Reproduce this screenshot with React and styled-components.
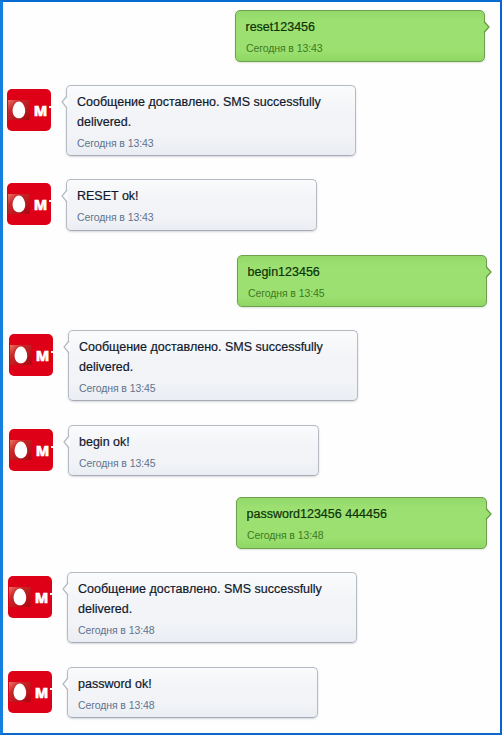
import React from 'react';
import styled, { createGlobalStyle, css } from 'styled-components';

const groups = [
  {
    shift: 0,
    time: 'Сегодня в 13:43',
    messages: [
      { out: true, text: ['reset123456'], width: 250, height: 52, gap: 23 },
      { text: ['Сообщение доставлено. SMS successfully', 'delivered.'], width: 290, height: 71, gap: 23 },
      { text: ['RESET ok!'], width: 251, height: 52, gap: 24 },
    ],
  },
  {
    shift: 2,
    time: 'Сегодня в 13:45',
    messages: [
      { out: true, text: ['begin123456'], width: 250, height: 52, gap: 23 },
      { text: ['Сообщение доставлено. SMS successfully', 'delivered.'], width: 290, height: 71, gap: 24 },
      { text: ['begin ok!'], width: 251, height: 51, gap: 21 },
    ],
  },
  {
    shift: 1,
    time: 'Сегодня в 13:48',
    messages: [
      { out: true, text: ['password123456 444456'], width: 251, height: 52, gap: 23 },
      { text: ['Сообщение доставлено. SMS successfully', 'delivered.'], width: 290, height: 71, gap: 24 },
      { text: ['password ok!'], width: 251, height: 51, gap: 0 },
    ],
  },
];

function OperatorLogo() {
  return (
    <LogoSvg viewBox="0 0 44 43">
      <defs>
        <linearGradient id="tile" x1="0" y1="0" x2="1" y2="1">
          <stop offset="0" stopColor="#ec7563" />
          <stop offset="0.3" stopColor="#c9282a" />
          <stop offset="1" stopColor="#a90711" />
        </linearGradient>
      </defs>
      <rect width="44" height="43" fill="#dd0017" />
      <rect x="1" y="11" width="21.5" height="20" fill="url(#tile)" />
      <path
        d="M11.900 12.500c3.600 0 6.300 4.900 6.300 9.200 0 4.300-2.600 7.600-6.200 7.600-3.800 0-6.400-3.300-6.400-7.600 0-4.300 2.700-9.200 6.300-9.200z"
        fill="#fff"
      />
      <LogoText x="26.800" y="26.800">
        М
      </LogoText>
      <rect x="42" y="17" width="2" height="2" fill="#fff" />
    </LogoSvg>
  );
}

function Message({ message, time }) {
  const { out, text, width, height, gap } = message;
  return (
    <Row $out={out} $gap={gap}>
      {!out && (
        <Avatar>
          <OperatorLogo />
        </Avatar>
      )}
      <Bubble $out={out} $width={width} $height={height}>
        {text.map((line) => (
          <Line key={line} $out={out}>
            {line}
          </Line>
        ))}
        <Time $out={out}>{time}</Time>
        <Tail $out={out} viewBox="0 0 7 14">
          {out ? (
            <>
              <path d="M0 1.500H1L6 7L1 12.500H0z" fill="#9be070" />
              <path d="M1 1.500L6 7L1 12.500" fill="none" stroke="#629b3b" strokeWidth="1.200" />
            </>
          ) : (
            <>
              <path d="M7 1H6L1 7L6 13H7z" fill="#fafbfc" />
              <path d="M6 1L1 7L6 13" fill="none" stroke="#b3b9c1" strokeWidth="1.200" />
            </>
          )}
        </Tail>
      </Bubble>
    </Row>
  );
}

function App() {
  return (
    <>
      <GlobalStyle />
      <Frame>
        {groups.map((group) => (
          <Group key={group.time} $shift={group.shift}>
            {group.messages.map((message) => (
              <Message key={message.text[0]} message={message} time={group.time} />
            ))}
          </Group>
        ))}
      </Frame>
    </>
  );
}

export default App;

const GlobalStyle = createGlobalStyle`
  body {
    margin: 0;
    background: #fff;
    font-family: 'Liberation Sans', Arial, sans-serif;
  }
`;

const Frame = styled.div`
  box-sizing: border-box;
  width: 502px;
  height: 735px;
  padding-top: 8px;
  border-style: solid;
  border-width: 2px 2px 2px 3px;
  border-color: #086bd1 #0b62d3 #0b69c9 #147fdf;
  background: #fefefe;
  overflow: hidden;
`;

const Group = styled.section`
  padding-left: ${(props) => props.$shift + 4}px;
`;

const Row = styled.div`
  display: flex;
  align-items: flex-start;
  gap: 15px;
  margin-bottom: ${(props) => props.$gap}px;
  ${(props) =>
    props.$out &&
    css`
      padding-left: 228px;
    `}
`;

const Avatar = styled.div`
  width: 44px;
  height: 42px;
  margin-top: 4px;
  border-radius: 5px;
  overflow: hidden;
`;

const LogoSvg = styled.svg`
  display: block;
  width: 44px;
  height: 43px;
`;

const LogoText = styled.text`
  font-family: 'Open Sans', sans-serif;
  font-size: 14px;
  font-weight: 800;
  fill: #fff;
  stroke: #fff;
  stroke-width: 0.4px;
`;

const Bubble = styled.div`
  position: relative;
  box-sizing: border-box;
  width: ${(props) => props.$width}px;
  height: ${(props) => props.$height}px;
  padding: 6px 10px 0;
  border: 1px solid #b5bac3;
  border-bottom-color: #a6abb5;
  border-radius: 5px;
  background: linear-gradient(#fafbfc, #f2f4f7 40%, #f1f3f6 75%, #eaedf3);
  box-shadow: 0 1px 2px rgba(90, 100, 120, 0.25);
  ${(props) =>
    props.$out &&
    css`
      border-color: #6fa04f;
      background: linear-gradient(#93d969, #9be070 20%, #9be070 80%, #8fd664);
      box-shadow: 0 1px 2px rgba(80, 130, 50, 0.2);
    `}
`;

const Line = styled.p`
  margin: 0;
  margin-left: ${(props) => (props.$out ? '-0.5px' : '0')};
  font-size: 12.5px;
  line-height: 20px;
  white-space: nowrap;
  color: ${(props) => (props.$out ? '#0d3208' : '#10182c')};
  -webkit-text-stroke: 0.2px;
`;

const Time = styled.span`
  display: block;
  margin-top: 3px;
  font-size: 10.5px;
  line-height: 17px;
  letter-spacing: -0.1px;
  white-space: nowrap;
  color: ${(props) => (props.$out ? '#3e7a1f' : '#60738f')};
`;

const Tail = styled.svg`
  position: absolute;
  top: 9px;
  left: ${(props) => (props.$out ? 'auto' : '-6px')};
  right: ${(props) => (props.$out ? '-6px' : 'auto')};
  width: 7px;
  height: 14px;
`;
